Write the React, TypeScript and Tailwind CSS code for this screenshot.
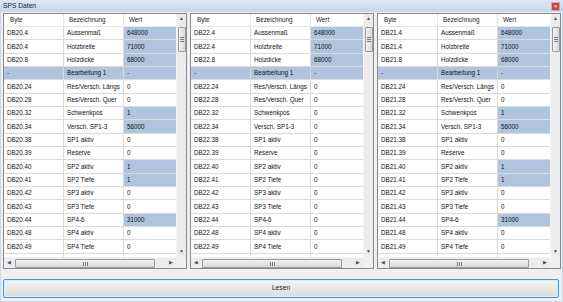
type Row = { byte: string; name: string; wert: string; hl: boolean; group?: boolean };

const names = [
  'Aussenmaß',
  'Holzbreite',
  'Holzdicke',
  'Bearbeitung 1',
  'Res/Versch. Längs',
  'Res/Versch. Quer',
  'Schwenkpos',
  'Versch. SP1-3',
  'SP1 aktiv',
  'Reserve',
  'SP2 aktiv',
  'SP2 Tiefe',
  'SP3 aktiv',
  'SP3 Tiefe',
  'SP4-6',
  'SP4 aktiv',
  'SP4 Tiefe',
  'SP5 aktiv',
];
const offsets = ['4', '4', '8', '-', '24', '28', '32', '34', '38', '39', '40', '41', '42', '43', '44', '48', '49', '50'];
const fullValues = ['648000', '71000', '68000', '-', '0', '0', '1', '56000', '0', '0', '1', '1', '0', '0', '31000', '0', '0', '0'];
const emptyValues = ['648000', '71000', '68000', '-', '0', '0', '0', '0', '0', '0', '0', '0', '0', '0', '0', '0', '0', '0'];

function makeRows(db: number, values: string[]): Row[] {
  return names.map((name, i) => ({
    byte: offsets[i] === '-' ? '-' : `DB${db}.${offsets[i]}`,
    name,
    wert: values[i],
    hl: values[i] !== '0',
    group: offsets[i] === '-',
  }));
}

const font = { fontFamily: '"Liberation Sans", Arial, sans-serif' };

function VScroll() {
  return (
    <div className="w-[10px] h-full bg-[#ececec] flex flex-col items-center border-l border-[#f4f4f4]">
      <div className="h-[10px] w-full flex items-center justify-center text-[5px] text-[#505050]">▲</div>
      <div className="mt-[3px] h-[25px] w-[8px] rounded-[1px] border border-[#9a9a9a] bg-gradient-to-r from-[#f2f2f2] to-[#d8d8d8] flex flex-col items-center justify-center gap-[1px]">
        <div className="w-[4px] h-px bg-[#7a7a7a]" />
        <div className="w-[4px] h-px bg-[#7a7a7a]" />
        <div className="w-[4px] h-px bg-[#7a7a7a]" />
      </div>
      <div className="flex-1" />
      <div className="h-[10px] w-full flex items-center justify-center text-[5px] text-[#505050]">▼</div>
    </div>
  );
}

function HScroll() {
  return (
    <div className="h-[11px] flex bg-[#ececec] border-t border-[#f4f4f4]">
      <div className="w-[10px] flex items-center justify-center text-[5px] text-[#505050]">◀</div>
      <div className="ml-px w-[140px] h-[9px] mt-px rounded-[1px] border border-[#9a9a9a] bg-gradient-to-b from-[#f2f2f2] to-[#d8d8d8] flex items-center justify-center gap-[1px]">
        <div className="w-px h-[4px] bg-[#7a7a7a]" />
        <div className="w-px h-[4px] bg-[#7a7a7a]" />
        <div className="w-px h-[4px] bg-[#7a7a7a]" />
      </div>
      <div className="flex-1" />
      <div className="w-[10px] flex items-center justify-center text-[5px] text-[#505050]">▶</div>
      <div className="w-[10px] bg-[#f0f0f0]" />
    </div>
  );
}

function Panel({ rows }: { rows: Row[] }) {
  return (
    <div className="w-[184px] h-[256px] border border-[#828790] bg-white flex flex-col">
      <div className="flex h-[243px]">
        <div className="w-[172px] overflow-hidden flex flex-col">
          <div className="grid grid-cols-[60px_60px_52px] h-[13px] shrink-0 text-[6.3px] text-[#1a1a1a] border-b border-[#e5e5e5]">
            <div className="pl-[6px] flex items-center border-r border-[#e5e5e5]">Byte</div>
            <div className="pl-[5px] flex items-center border-r border-[#e5e5e5]">Bezeichnung</div>
            <div className="pl-[5px] flex items-center">Wert</div>
          </div>
          {rows.map((r, i) => (
            <div key={i} className="grid grid-cols-[60px_60px_52px] h-[13.33px] shrink-0 text-[6.3px] text-[#111]">
              <div className={`pl-[3px] flex items-center border-r border-b border-[#dadada] ${r.group ? 'bg-[#b0c4de]' : ''}`}>{r.byte}</div>
              <div className={`pl-[3px] flex items-center border-r border-b border-[#dadada] ${r.group ? 'bg-[#b0c4de]' : ''}`}>{r.name}</div>
              <div className={`pl-[3px] flex items-center border-b border-[#dadada] ${r.hl ? 'bg-[#b0c4de]' : ''}`}>{r.wert}</div>
            </div>
          ))}
        </div>
        <VScroll />
      </div>
      <HScroll />
    </div>
  );
}

export default function App() {
  return (
    <div className="w-[563px] h-[302px] bg-[#c7d8ec] flex flex-col overflow-hidden" style={font}>
      <div className="h-[12px] shrink-0 flex items-center justify-between pl-[3px] pr-[3px] bg-gradient-to-b from-[#dbe7f5] to-[#c3d6ed]">
        <span className="text-[6.7px] text-[#1a1a1a]">SPS Daten</span>
        <div className="w-[9px] h-[9px] border border-[#e8a0a0] bg-[#c44a4a] flex items-center justify-center text-[6px] leading-none text-white">×</div>
      </div>
      <div className="flex-1 mx-[1px] mb-[1px] bg-[#f0f0f0] flex flex-col pt-px px-[2px]">
        <div className="flex gap-[3px]">
          <Panel rows={makeRows(20, fullValues)} />
          <Panel rows={makeRows(22, emptyValues)} />
          <Panel rows={makeRows(21, fullValues)} />
        </div>
        <button className="mt-[10px] h-[19px] w-[556px] rounded-[2px] border border-[#3c9ad8] bg-gradient-to-b from-[#f3f3f3] to-[#dcdcdc] text-[6.7px] text-[#1a1a1a] flex items-center justify-center shadow-[inset_0_0_0_1px_#d8eefa]">
          Lesen
        </button>
      </div>
    </div>
  );
}
